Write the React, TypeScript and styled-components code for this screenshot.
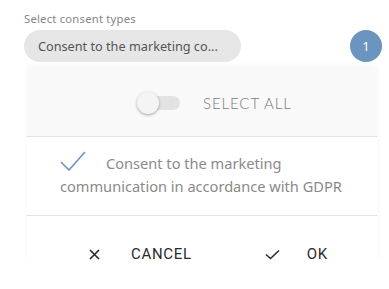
import styled, { createGlobalStyle } from 'styled-components';

const GlobalStyle = createGlobalStyle`
  html, body {
    margin: 0;
    padding: 0;
    background: #ffffff;
  }
  * {
    box-sizing: border-box;
  }
`;

const Page = styled.div`
  width: 389px;
  height: 289px;
  padding: 11px 7px 0 24px;
  font-family: 'Noto Sans', Lato, sans-serif;
  overflow: hidden;
`;

const FieldLabel = styled.div`
  font-size: 11.3px;
  line-height: 15px;
  letter-spacing: 0.2px;
  color: #858585;
  margin-bottom: 4px;
`;

const FieldRow = styled.div`
  display: flex;
  align-items: center;
  justify-content: space-between;
`;

const SelectPill = styled.div`
  width: 217px;
  height: 32px;
  border-radius: 16px;
  background: #e6e6e6;
  color: #555555;
  font-size: 12.7px;
  display: flex;
  align-items: center;
  padding-left: 14px;
`;

const CountBadge = styled.div`
  width: 32px;
  height: 32px;
  border-radius: 50%;
  background: #6b95bf;
  color: #ffffff;
  font-size: 13px;
  display: flex;
  align-items: center;
  justify-content: center;
`;

const Panel = styled.div`
  margin: 7px 0 0 3px;
  width: 350px;
  background: #ffffff;
  box-shadow: 0 -3px 6px rgba(0, 0, 0, 0.04);
`;

const SelectAllRow = styled.div`
  height: 68px;
  background: #f9f9f9;
  border-bottom: 1px solid #e2e2e2;
  display: flex;
  align-items: center;
  gap: 23px;
  padding-left: 117px;
`;

const Track = styled.div`
  position: relative;
  width: 36px;
  height: 14px;
  border-radius: 7px;
  background: #e3e3e3;
`;

const Thumb = styled.div`
  position: absolute;
  left: -7px;
  top: -4px;
  width: 22px;
  height: 22px;
  border-radius: 50%;
  background: #f4f4f4;
  box-shadow: 0 1px 3px rgba(0, 0, 0, 0.35);
`;

const SelectAllText = styled.span`
  font-family: Lato, sans-serif;
  font-size: 15px;
  color: #7b7b7b;
  font-weight: 300;
  letter-spacing: 0.9px;
`;

const OptionRow = styled.div`
  height: 79px;
  border-bottom: 1px solid #e2e2e2;
  padding: 14px 20px 0 33px;
  font-size: 14.6px;
  line-height: 23px;
  color: #8a8a8a;
`;

const CheckMark = styled.svg`
  width: 26px;
  height: 20px;
  vertical-align: -2px;
  margin-right: 20px;
`;

const ActionRow = styled.div`
  display: flex;
  gap: 73px;
  padding: 28px 0 0 62px;
`;

const ActionButton = styled.button<{ $gap: number }>`
  border: none;
  background: none;
  padding: 0;
  display: flex;
  align-items: center;
  gap: ${(p) => p.$gap}px;
  font-family: Roboto, 'Liberation Sans', sans-serif;
  font-size: 15px;
  line-height: 20px;
  letter-spacing: 0.7px;
  color: #2a2a2a;
  cursor: pointer;
`;

export default function App() {
  return (
    <>
      <GlobalStyle />
      <Page>
        <FieldLabel>Select consent types</FieldLabel>
        <FieldRow>
          <SelectPill>Consent to the marketing co...</SelectPill>
          <CountBadge>1</CountBadge>
        </FieldRow>
        <Panel>
          <SelectAllRow>
            <Track>
              <Thumb />
            </Track>
            <SelectAllText>SELECT ALL</SelectAllText>
          </SelectAllRow>
          <OptionRow>
            <CheckMark viewBox="0 0 26 20">
              <path d="M1 11 L9 19 L25 1" fill="none" stroke="#6b95bf" strokeWidth="1.6" />
            </CheckMark>
            Consent to the marketing communication in accordance with GDPR
          </OptionRow>
          <ActionRow>
            <ActionButton $gap={31}>
              <svg width="11" height="11" viewBox="0 0 11 11">
                <path d="M1 1 L10 10 M10 1 L1 10" stroke="#2a2a2a" strokeWidth="1.6" />
              </svg>
              CANCEL
            </ActionButton>
            <ActionButton $gap={27}>
              <svg width="15" height="11" viewBox="0 0 15 11">
                <path d="M1 5.5 L5.5 9.5 L14 1.5" fill="none" stroke="#2a2a2a" strokeWidth="1.6" />
              </svg>
              OK
            </ActionButton>
          </ActionRow>
        </Panel>
      </Page>
    </>
  );
}
